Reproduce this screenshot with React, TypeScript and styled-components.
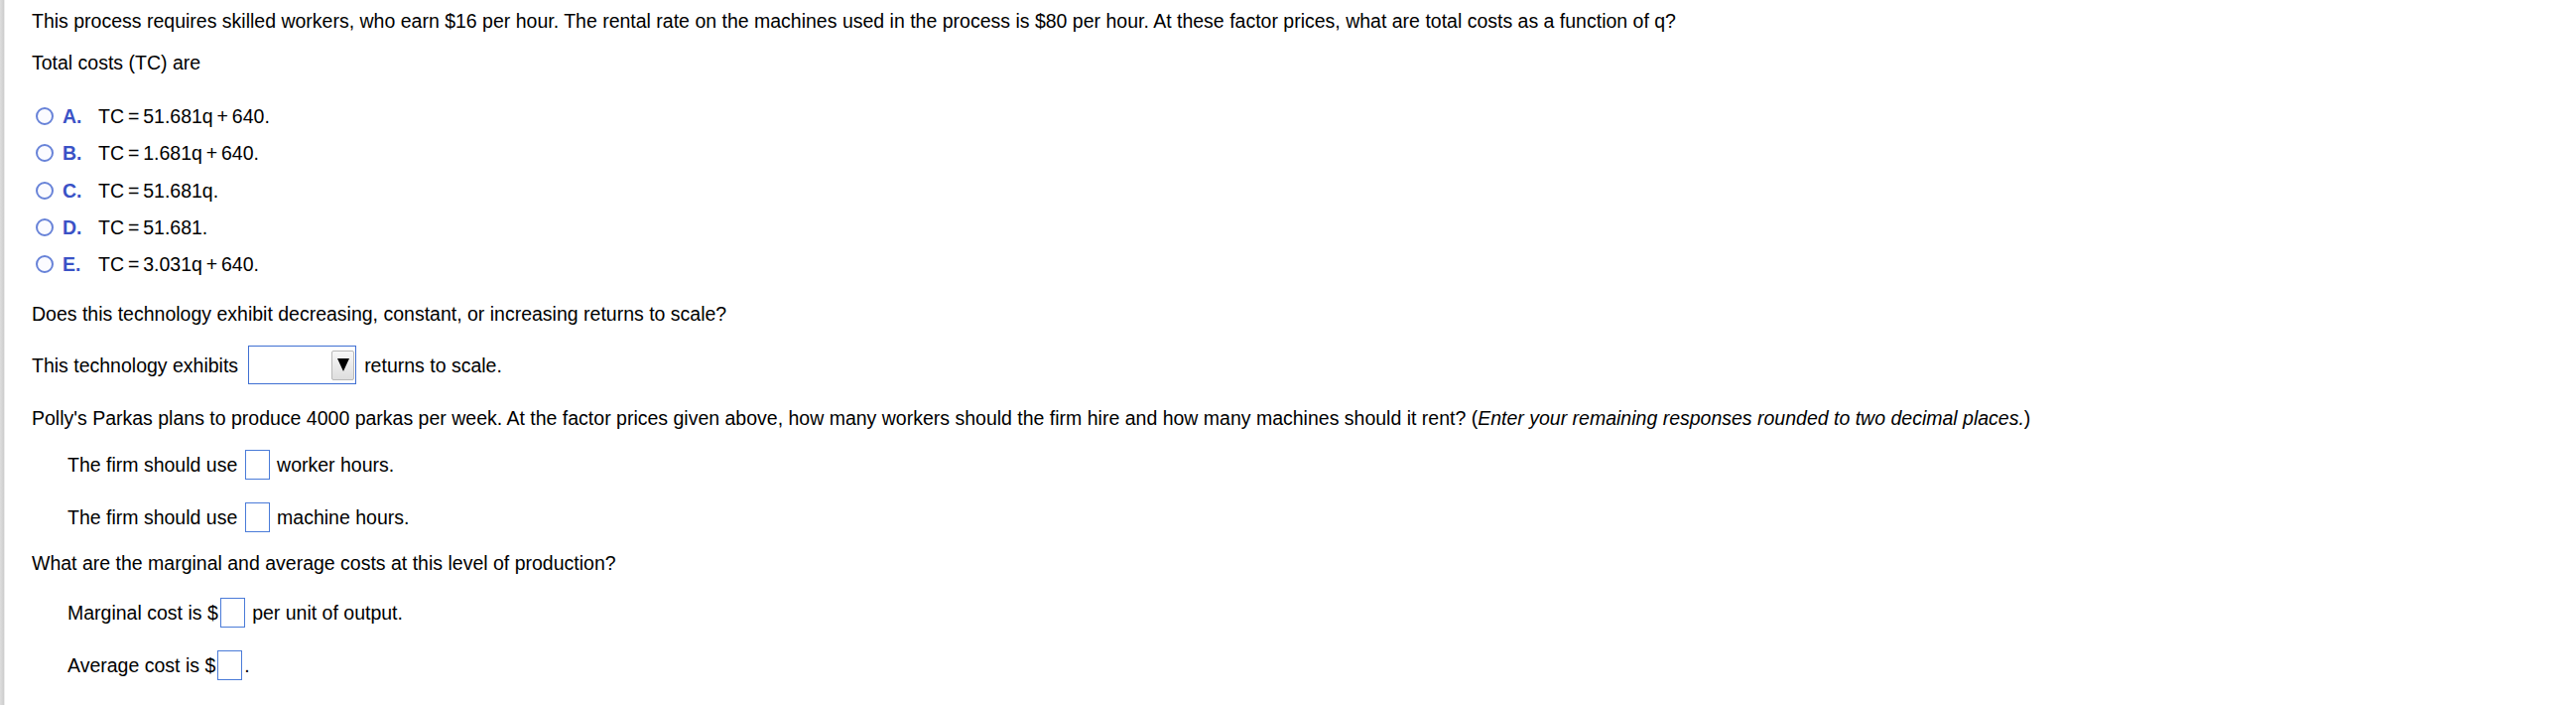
import * as React from "react";
import styled, {createGlobalStyle} from "styled-components";

const GlobalStyle = createGlobalStyle`
  html, body {
    margin: 0;
    padding: 0;
    background: #ffffff;
  }
  body {
    font-family: "Liberation Sans", Arial, sans-serif;
    color: #000000;
  }
`

// thin spaces round "=" and "+", as the formula renderer sets them
const T = "\u2009"

const OPTIONS = [
    {letter: "A.", formula: `TC${T}=${T}51.681q${T}+${T}640.`},
    {letter: "B.", formula: `TC${T}=${T}1.681q${T}+${T}640.`},
    {letter: "C.", formula: `TC${T}=${T}51.681q.`},
    {letter: "D.", formula: `TC${T}=${T}51.681.`},
    {letter: "E.", formula: `TC${T}=${T}3.031q${T}+${T}640.`},
]

export default function App() {
    return (
        <>
            <GlobalStyle/>
            <Page>
                <Rail/>
                <Content>
                    <Prompt>
                        This process requires skilled workers, who earn $16 per hour. The rental rate on the machines
                        used in the process is $80 per hour. At these factor prices, what are total costs as a function
                        of q?
                    </Prompt>
                    <Prompt $mt={20}>Total costs (TC) are</Prompt>
                    <OptionList>
                        {OPTIONS.map(o => (
                            <Option key={o.letter}>
                                <Radio/>
                                <OptionLetter>{o.letter}</OptionLetter>
                                <span>{o.formula}</span>
                            </Option>
                        ))}
                    </OptionList>
                    <Prompt $mt={28}>Does this technology exhibit decreasing, constant, or increasing returns to scale?</Prompt>
                    <AnswerRow $mt={21} $height={39}>
                        <Piece>This technology exhibits</Piece>
                        <Select>
                            <SelectButton>
                                <svg width="12" height="13" viewBox="0 0 12 13">
                                    <path d="M0 0 H12 L6 13 Z" fill="#000"/>
                                </svg>
                            </SelectButton>
                        </Select>
                        <Piece>returns to scale.</Piece>
                    </AnswerRow>
                    <Prompt $mt={23}>
                        Polly's Parkas plans to produce 4000 parkas per week. At the factor prices given above, how many
                        workers should the firm hire and how many machines should it rent? (<em>Enter your remaining
                        responses rounded to two decimal places.</em>)
                    </Prompt>
                    <AnswerRow $mt={21} $indent>
                        <Piece>The firm should use </Piece>
                        <InputBox/>
                        <Piece> worker hours.</Piece>
                    </AnswerRow>
                    <AnswerRow $mt={23} $indent>
                        <Piece>The firm should use </Piece>
                        <InputBox/>
                        <Piece> machine hours.</Piece>
                    </AnswerRow>
                    <Prompt $mt={20}>What are the marginal and average costs at this level of production?</Prompt>
                    <AnswerRow $mt={24} $indent>
                        <Piece>Marginal cost is $</Piece>
                        <InputBox/>
                        <Piece> per unit of output.</Piece>
                    </AnswerRow>
                    <AnswerRow $mt={23} $indent>
                        <Piece>Average cost is $</Piece>
                        <InputBox/>
                        <Piece>.</Piece>
                    </AnswerRow>
                </Content>
            </Page>
        </>
    )
}

const Page = styled.div`
  display: flex;
  min-height: 100vh;
`

const Rail = styled.div`
  width: 4px;
  flex-shrink: 0;
  background: linear-gradient(90deg, #dedede, #cdcdcd);
  border-right: 1px solid #ececec;
`

const Content = styled.div`
  display: flex;
  flex-direction: column;
  align-items: flex-start;
  padding: 10px 0 0 27px;
  font-size: 19.5px;
  line-height: 22px;
`

const Prompt = styled.p<{ $mt?: number }>`
  margin: ${p => p.$mt ?? 0}px 0 0;
  line-height: 22px;

  em {
    font-style: italic;
  }
`

const OptionList = styled.div`
  display: flex;
  flex-direction: column;
  gap: 15.3px;
  margin-top: 32px;
`

const Option = styled.div`
  display: flex;
  align-items: center;
  height: 22px;
  padding-left: 4px;
`

const Radio = styled.span`
  box-sizing: border-box;
  width: 18px;
  height: 18px;
  border-radius: 50%;
  border: 2px solid #6883d8;
  background: #fbfbff;
  margin-right: 9px;
`

const OptionLetter = styled.span`
  width: 36px;
  font-weight: bold;
  color: #3a52c6;
`

const AnswerRow = styled.div<{ $mt: number, $height?: number, $indent?: boolean }>`
  display: flex;
  align-items: center;
  height: ${p => p.$height ?? 30}px;
  margin-top: ${p => p.$mt}px;
  padding-left: ${p => p.$indent ? 36 : 0}px;
`

const Piece = styled.span`
  white-space: pre;
`

const Select = styled.div`
  box-sizing: border-box;
  width: 109px;
  height: 39px;
  margin: 0 8px 0 10px;
  border: 1.5px solid #3f6fd2;
  background: #ffffff;
  display: flex;
  align-items: center;
  justify-content: flex-end;
  padding-right: 1px;
`

const SelectButton = styled.div`
  box-sizing: border-box;
  width: 23px;
  height: 30px;
  border: 1px solid #b8b8b8;
  border-radius: 2px;
  background: linear-gradient(180deg, #f7f7f7, #dedede);
  display: flex;
  align-items: center;
  justify-content: center;
`

const InputBox = styled.span`
  box-sizing: border-box;
  width: 25px;
  height: 30px;
  margin: 0 2px;
  border: 1px solid #4a7bd8;
  background: #ffffff;
`
